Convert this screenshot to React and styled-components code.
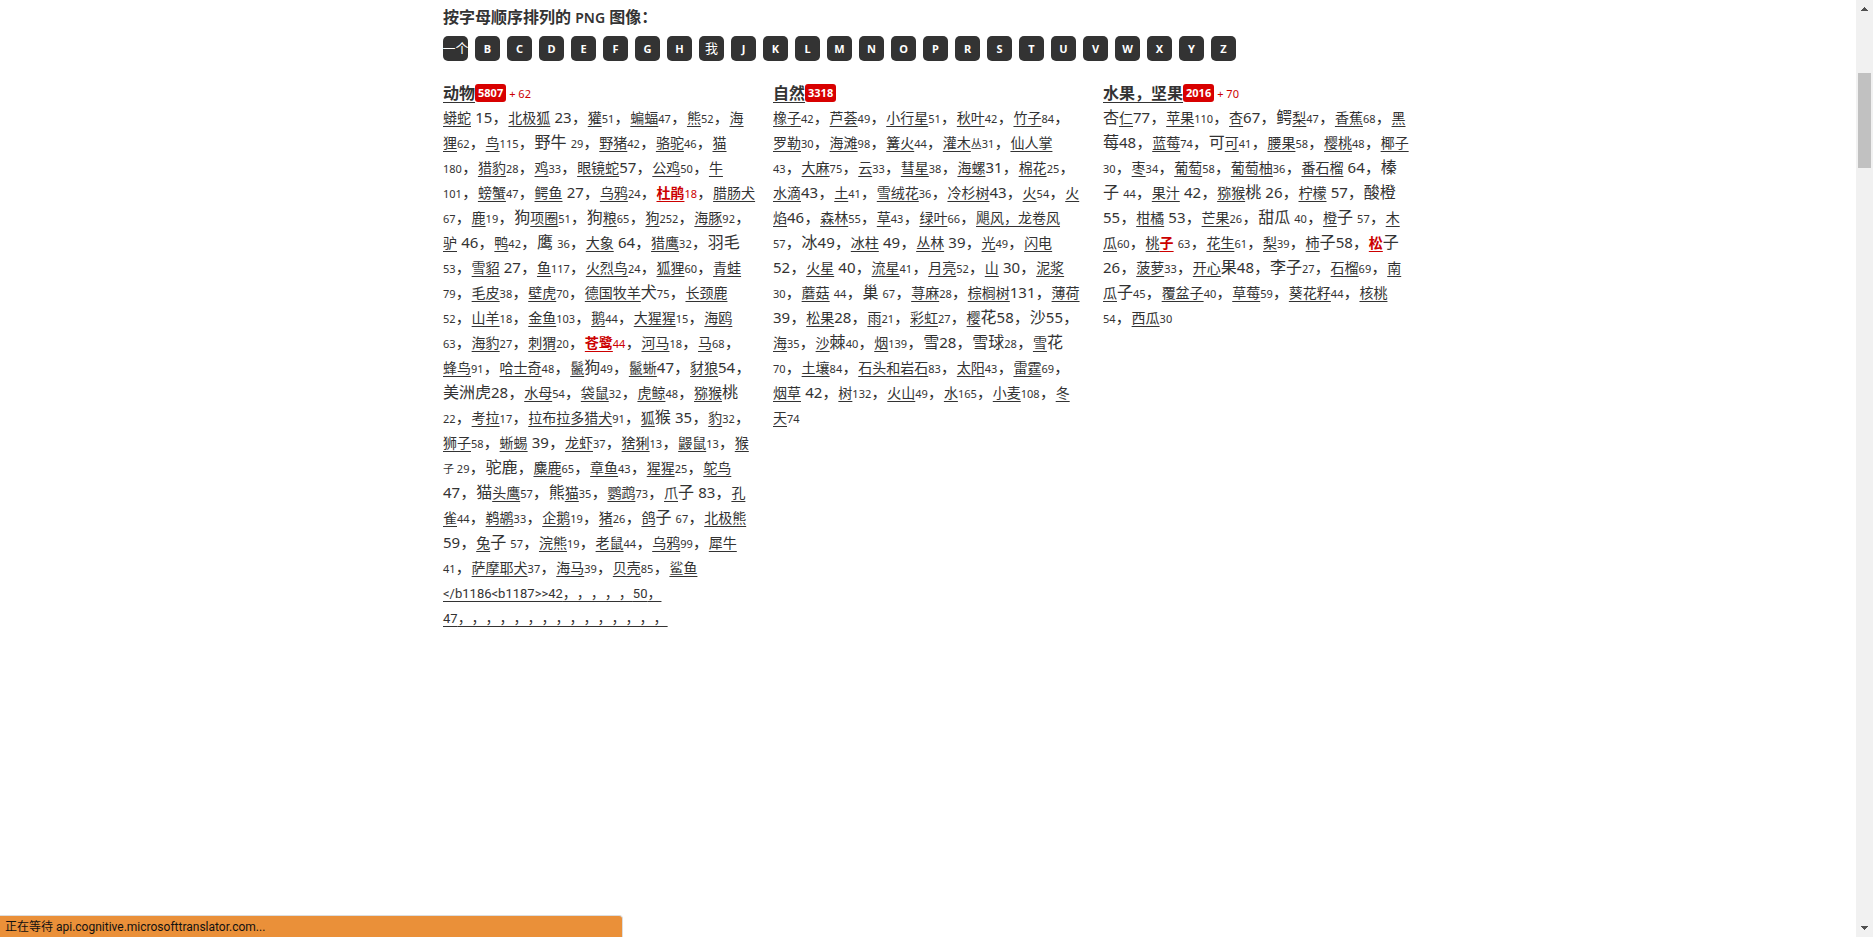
import React, { Fragment } from "react";
import styled, { createGlobalStyle, css } from "styled-components";

const ink = "#333";
const red = "#c00";

const GlobalStyle = createGlobalStyle`
  * { box-sizing: border-box; }
  body {
    margin: 0;
    background: #fff;
    color: ${ink};
    font-family: "Noto Sans", "Noto Sans CJK SC", sans-serif;
    font-size: 16px;
    line-height: 25px;
    text-spacing-trim: space-all;
  }
`;

const Page = styled.div`
  min-height: 100vh;
  padding-right: 17px;
`;

const Content = styled.main`
  width: 100%;
  max-width: 990px;
  margin: 0 auto;
  padding: 5px 10px 40px;
`;

const Title = styled.h1`
  margin: 0 0 6px;
  font-size: 16px;
  line-height: 25px;
  font-weight: 600;
`;

const Latin = styled.span`
  font-size: 14px;
  line-height: 16px;
`;

const Letters = styled.nav`
  display: flex;
  flex-wrap: wrap;
  gap: 7px;
  margin-bottom: 20px;
`;

const Letter = styled.a`
  display: flex;
  align-items: center;
  justify-content: center;
  width: 25px;
  height: 25px;
  overflow: hidden;
  border-radius: 5px;
  background: ${ink};
  color: #fff;
  font-size: ${(p) => (p.$cjk ? "13px" : "11px")};
  font-weight: ${(p) => (p.$cjk ? 400 : 700)};
  white-space: nowrap;
  text-decoration: none;
`;

const Columns = styled.div`
  display: grid;
  grid-template-columns: repeat(auto-fit, minmax(310px, 1fr));
  gap: 20px;
`;

const Category = styled.section`
  min-width: 0;
`;

const Heading = styled.h2`
  display: flex;
  align-items: center;
  height: 24px;
  margin: 0;
  font-size: 16px;
  font-weight: 600;
`;

const HeadingLink = styled.a`
  color: ${ink};
  text-decoration: underline;
  text-underline-offset: 3px;
  text-decoration-thickness: 1px;
`;

const Badge = styled.span`
  padding: 0 3px;
  border-radius: 3px;
  background: #d80000;
  color: #fff;
  font-size: 11px;
  line-height: 18px;
  font-weight: 700;
`;

const Added = styled.span`
  margin-left: 3px;
  color: ${red};
  font-size: 11px;
  font-weight: 400;
`;

const Entries = styled.p`
  margin: 0;
  white-space: pre;
`;

const EntryLink = styled.a`
  color: ${ink};
  font-size: 14px;
  line-height: 16px;
  text-decoration: underline;
  text-decoration-thickness: 1px;
  text-underline-offset: 3px;
  ${(p) =>
    p.$hot &&
    css`
      color: ${red};
      font-weight: 700;
    `}
`;

const Code = styled.span`
  font-family: Roboto, sans-serif;
  font-size: 13px;
  line-height: 16px;
`;

const Count = styled.span`
  color: ${(p) => (p.$hot ? red : ink)};
  font-size: ${(p) => (p.$large ? "15px" : "11px")};
  line-height: 16px;
`;

const StatusBar = styled.div`
  position: fixed;
  left: 0;
  bottom: 0;
  width: 34%;
  min-width: 300px;
  max-width: 623px;
  height: 22px;
  padding-left: 5px;
  border-top: 1px solid #ddd;
  border-right: 1px solid #ddd;
  border-top-right-radius: 4px;
  background: #ea9039;
  color: #111;
  font-family: Roboto, "Noto Sans CJK SC", sans-serif;
  font-size: 12px;
  line-height: 22px;
  white-space: nowrap;
`;

const ScrollTrack = styled.div`
  position: fixed;
  top: 0;
  right: 0;
  bottom: 0;
  display: flex;
  flex-direction: column;
  align-items: center;
  width: 17px;
  padding: 7px 2px;
  background: #f1f1f1;
`;

const ScrollArrow = styled.svg`
  width: 7px;
  height: 4px;
  fill: #505050;
`;

const ScrollThumb = styled.div`
  width: 13px;
  height: 95px;
  margin: 62px 0 auto;
  background: #c1c1c1;
`;

const letters = ["一个", ..."BCDEFGH我JKLMNOPRSTUVWXYZ"];

/* Entry notation: [name] is a link, {n} a small count, "!" marks a highlighted one. */
const categories = [
  {
    name: "动物",
    total: 5807,
    added: 62,
    entries: `[蟒蛇] 15，[北极狐] 23，[獾]{51}，[蝙蝠]{47}，[熊]{52}，[海
狸]{62}，[鸟]{115}，野牛 {29}，[野猪]{42}，[骆驼]{46}，[猫]
{180}，[猎豹]{28}，[鸡]{33}，[眼镜蛇]57，[公鸡]{50}，[牛]
{101}，[螃蟹]{47}，[鳄鱼] 27，[乌鸦]{24}，[!杜鹃]{!18}，[腊肠犬]
{67}，[鹿]{19}，狗[项圈]{51}，狗[粮]{65}，[狗]{252}，[海豚]{92}，
[驴] 46，[鸭]{42}，鹰 {36}，[大象] 64，[猎鹰]{32}，羽毛
{53}，[雪貂] 27，[鱼]{117}，[火烈鸟]{24}，[狐狸]{60}，[青蛙]
{79}，[毛皮]{38}，[壁虎]{70}，[德国牧羊]犬{75}，[长颈鹿]
{52}，[山羊]{18}，[金鱼]{103}，[鹅]{44}，[大猩猩]{15}，[海鸥]
{63}，[海豹]{27}，[刺猬]{20}，[!苍鹭]{!44}，[河马]{18}，[马]{68}，
[蜂鸟]{91}，[哈士奇]{48}，[鬣]狗{49}，[鬣蜥]47，[豺狼]54，
美洲虎28，[水母]{54}，[袋鼠]{32}，[虎鲸]{48}，[猕猴]桃
{22}，[考拉]{17}，[拉布拉多猎犬]{91}，[狐]猴 35，[豹]{32}，
[狮子]{58}，[蜥蜴] 39，[龙虾]{37}，[猞猁]{13}，[鼹鼠]{13}，[猴]
{子 29}，驼鹿，[麋鹿]{65}，[章鱼]{43}，[猩猩]{25}，[鸵鸟]
47，猫[头鹰]{57}，熊[猫]{35}，[鹦鹉]{73}，[爪]子 83，[孔
雀]{44}，[鹈鹕]{33}，[企鹅]{19}，[猪]{26}，[鸽]子 {67}，[北极熊]
59，[兔]子 {57}，[浣熊]{19}，[老鼠]{44}，[乌鸦]{99}，[犀牛]
{41}，[萨摩耶犬]{37}，[海马]{39}，[贝壳]{85}，[鲨鱼
</b1186<b1187>>42，，，，，50，
47，，，，，，，，，，，，，，，]`,
  },
  {
    name: "自然",
    total: 3318,
    entries: `[橡子]{42}，[芦荟]{49}，[小行星]{51}，[秋叶]{42}，[竹子]{84}，
[罗勒]{30}，[海滩]{98}，[篝火]{44}，[灌木]{丛31}，[仙人掌]
{43}，[大麻]{75}，[云]{33}，[彗星]{38}，[海螺]31，[棉花]{25}，
[水滴]43，[土]{41}，[雪绒花]{36}，[冷杉树]43，[火]{54}，[火
焰]46，[森林]{55}，[草]{43}，[绿叶]{66}，[飓风，龙卷风]
{57}，冰49，[冰柱] 49，[丛林] 39，[光]{49}，[闪电]
52，[火星] 40，[流星]{41}，[月亮]{52}，[山] 30，[泥浆]
{30}，[蘑菇] {44}，巢 {67}，[荨麻]{28}，[棕榈树]131，[薄荷]
39，[松果]28，[雨]{21}，[彩虹]{27}，[樱]花58，沙55，
[海]{35}，[沙]棘{40}，[烟]{139}，雪28，雪球{28}，[雪]花
{70}，[土壤]{84}，[石头和岩石]{83}，[太阳]{43}，[雷霆]{69}，
[烟草] 42，[树]{132}，[火山]{49}，[水]{165}，[小麦]{108}，[冬
天]{74}`,
  },
  {
    name: "水果，坚果",
    total: 2016,
    added: 70,
    entries: `杏[仁]77，[苹果]{110}，[杏]67，鳄[梨]{47}，[香蕉]{68}，[黑]
莓48，[蓝莓]{74}，可[可]{41}，[腰果]{58}，[樱桃]{48}，[椰子]
{30}，[枣]{34}，[葡萄]{58}，[葡萄柚]{36}，[番石榴] 64，榛
子 {44}，[果汁] 42，[猕猴]桃 26，[柠檬] 57，酸橙
55，[柑橘] 53，[芒果]{26}，甜瓜 {40}，[橙]子 {57}，[木
瓜]{60}，[桃][!子] {63}，[花生]{61}，[梨]{39}，[柿]子58，[!松]子
26，[菠萝]{33}，[开心]果48，李子{27}，[石榴]{69}，[南
瓜]子{45}，[覆盆子]{40}，[草莓]{59}，[葵花籽]{44}，[核桃]
{54}，[西瓜]{30}`,
  },
];

function withBreaks(text) {
  return text.split("\n").map((line, i) => (
    <Fragment key={i}>
      {i > 0 && <br />}
      {line}
    </Fragment>
  ));
}

function renderLinkText(text) {
  return text
    .split(/([\x21-\x7e]+)/)
    .map((part, i) =>
      i % 2 ? <Code key={i}>{part}</Code> : <Fragment key={i}>{withBreaks(part)}</Fragment>
    );
}

function renderEntries(source) {
  return source.match(/\[[^\]]*\]|\{[^}]*\}|\d+|[^[{\d]+/g).map((token, i) => {
    const hot = token[1] === "!";
    const body = token.slice(hot ? 2 : 1, -1);
    if (token[0] === "[") {
      return (
        <EntryLink key={i} href="#" $hot={hot}>
          {renderLinkText(body)}
        </EntryLink>
      );
    }
    if (token[0] === "{") {
      return (
        <Count key={i} $hot={hot}>
          {body}
        </Count>
      );
    }
    if (/^\d/.test(token)) {
      return (
        <Count key={i} $large>
          {token}
        </Count>
      );
    }
    return <Fragment key={i}>{withBreaks(token)}</Fragment>;
  });
}

export default function App() {
  return (
    <Page lang="zh-CN">
      <GlobalStyle />
      <Content>
        <Title>
          按字母顺序排列的 <Latin>PNG</Latin> 图像：
        </Title>
        <Letters>
          {letters.map((l) => (
            <Letter key={l} href="#" $cjk={l > "Z"}>
              {l}
            </Letter>
          ))}
        </Letters>
        <Columns>
          {categories.map((c) => (
            <Category key={c.name}>
              <Heading>
                <HeadingLink href="#">{c.name}</HeadingLink>
                <Badge>{c.total}</Badge>
                {c.added && <Added>+ {c.added}</Added>}
              </Heading>
              <Entries>{renderEntries(c.entries)}</Entries>
            </Category>
          ))}
        </Columns>
      </Content>
      <StatusBar>正在等待 api.cognitive.microsofttranslator.com...</StatusBar>
      <ScrollTrack aria-hidden="true">
        <ScrollArrow viewBox="0 0 7 4">
          <path d="M3 0h1v1h1v1h1v1h1v1H0V3h1V2h1V1h1z" />
        </ScrollArrow>
        <ScrollThumb />
        <ScrollArrow viewBox="0 0 7 4">
          <path d="M0 0h7v1H6v1H5v1H4v1H3V3H2V2H1V1H0z" />
        </ScrollArrow>
      </ScrollTrack>
    </Page>
  );
}
